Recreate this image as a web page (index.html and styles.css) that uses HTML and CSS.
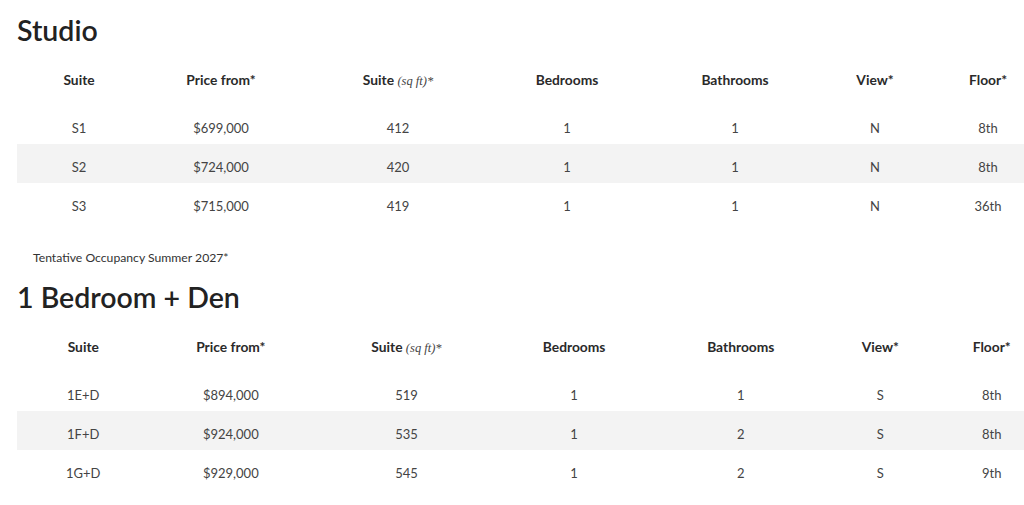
FILE: index.html
```html
<!DOCTYPE html>
<html lang="en">
<head>
<meta charset="utf-8">
<title>Suites</title>
<link rel="stylesheet" href="styles.css">
</head>
<body>
<main class="page">
  <section class="suite-group">
    <h2 class="group-title">Studio</h2>
    <table class="suite-table">
      <colgroup>
        <col class="a1"><col class="a2"><col class="a3"><col class="a4"><col class="a5"><col class="a6"><col class="a7">
      </colgroup>
      <thead>
        <tr><th>Suite</th><th>Price from*</th><th>Suite <em class="unit">(sq ft)*</em></th><th>Bedrooms</th><th>Bathrooms</th><th>View*</th><th>Floor*</th></tr>
      </thead>
      <tbody>
        <tr><td>S1</td><td>$699,000</td><td>412</td><td>1</td><td>1</td><td>N</td><td>8th</td></tr>
        <tr class="alt"><td>S2</td><td>$724,000</td><td>420</td><td>1</td><td>1</td><td>N</td><td>8th</td></tr>
        <tr><td>S3</td><td>$715,000</td><td>419</td><td>1</td><td>1</td><td>N</td><td>36th</td></tr>
      </tbody>
    </table>
    <p class="note">Tentative Occupancy Summer 2027*</p>
  </section>
  <section class="suite-group">
    <h2 class="group-title">1 Bedroom + Den</h2>
    <table class="suite-table">
      <colgroup>
        <col class="b1"><col class="b2"><col class="b3"><col class="b4"><col class="b5"><col class="b6"><col class="b7">
      </colgroup>
      <thead>
        <tr><th>Suite</th><th>Price from*</th><th>Suite <em class="unit">(sq ft)*</em></th><th>Bedrooms</th><th>Bathrooms</th><th>View*</th><th>Floor*</th></tr>
      </thead>
      <tbody>
        <tr><td>1E+D</td><td>$894,000</td><td>519</td><td>1</td><td>1</td><td>S</td><td>8th</td></tr>
        <tr class="alt"><td>1F+D</td><td>$924,000</td><td>535</td><td>1</td><td>2</td><td>S</td><td>8th</td></tr>
        <tr><td>1G+D</td><td>$929,000</td><td>545</td><td>1</td><td>2</td><td>S</td><td>9th</td></tr>
      </tbody>
    </table>
  </section>
</main>
</body>
</html>
```
FILE: styles.css
```css
html, body {
  margin: 0;
  padding: 0;
  background: #ffffff;
  overflow: hidden;
}
body {
  font-family: "Lato", "Noto Sans", sans-serif;
  color: #333333;
}
.page {
  padding-left: 17px;
}
.group-title {
  margin: 0;
  padding-top: 13px;
  font-size: 28.5px;
  line-height: 34px;
  font-weight: 600;
  color: #222222;
}
.suite-table {
  margin-top: 8px;
  border-collapse: collapse;
  table-layout: fixed;
  width: 1040px;
}
.suite-table th {
  height: 50px;
  box-sizing: border-box;
  padding: 0;
  font-size: 13.8px;
  line-height: 16px;
  font-weight: 700;
  color: #2a2a2a;
  text-align: center;
  vertical-align: middle;
}
.suite-table td {
  height: 39px;
  box-sizing: border-box;
  padding: 16px 0 8px;
  font-size: 13px;
  line-height: 15px;
  color: #444444;
  text-align: center;
}
.suite-table tr.alt td {
  background: #f3f3f3;
}
.unit {
  font-family: "Liberation Serif", serif;
  font-style: italic;
  font-weight: 400;
  font-size: 12.5px;
  line-height: 1;
  color: #444444;
}
.note {
  margin: 28px 0 1px 16px;
  font-size: 12.2px;
  line-height: 16px;
  color: #333333;
}
.a1 { width: 124px; }
.a2 { width: 160px; }
.a3 { width: 194px; }
.a4 { width: 144px; }
.a5 { width: 192px; }
.a6 { width: 88px; }
.a7 { width: 138px; }
.b1 { width: 132px; }
.b2 { width: 162px; }
.b3 { width: 188px; }
.b4 { width: 146px; }
.b5 { width: 186px; }
.b6 { width: 92px; }
.b7 { width: 130px; }
```
